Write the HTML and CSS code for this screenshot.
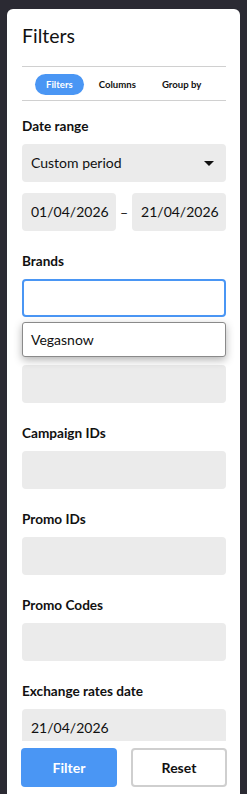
FILE: index.html
```html
<!DOCTYPE html>
<html>
<head>
<meta charset="utf-8">
<link rel="stylesheet" href="styles.css">
</head>
<body>
<div class="panel">
  <div class="head">
    <h1 class="title">Filters</h1>
    <div class="tabs">
      <span class="tab active">Filters</span>
      <span class="tab">Columns</span>
      <span class="tab">Group by</span>
    </div>
  </div>
  <div class="body">
    <div class="field">
      <div class="label">Date range</div>
      <div class="box select">Custom period<span class="caret"></span></div>
      <div class="dates">
        <div class="box">01/04/2026</div>
        <span class="dash">–</span>
        <div class="box">21/04/2026</div>
      </div>
    </div>
    <div class="field brands">
      <div class="label">Brands</div>
      <div class="box focus"></div>
      <div class="menu">Vegasnow</div>
    </div>
    <div class="field">
      <div class="label hidden">Games</div>
      <div class="box"></div>
    </div>
    <div class="field">
      <div class="label">Campaign IDs</div>
      <div class="box"></div>
    </div>
    <div class="field">
      <div class="label">Promo IDs</div>
      <div class="box"></div>
    </div>
    <div class="field">
      <div class="label">Promo Codes</div>
      <div class="box"></div>
    </div>
    <div class="field">
      <div class="label">Exchange rates date</div>
      <div class="box">21/04/2026</div>
    </div>
  </div>
  <div class="footer">
    <button class="btn primary">Filter</button>
    <button class="btn secondary">Reset</button>
  </div>
</div>
</body>
</html>
```
FILE: styles.css
```css
* { box-sizing: border-box; }
html, body { margin: 0; padding: 0; height: 100%; }
body {
  background: #2b2a33;
  font-family: Lato, "Noto Sans", sans-serif;
  color: #111;
  overflow: hidden;
}
.panel {
  margin: 9px 7px 0 7px;
  height: 785px;
  background: #fff;
  border-radius: 6px 6px 0 0;
  display: flex;
  flex-direction: column;
  overflow: hidden;
}
.head { padding: 15px 14px 0 15px; }
.title {
  margin: 0;
  font-size: 19.5px;
  font-weight: 400;
  line-height: 24px;
  height: 24px;
}
.tabs {
  margin-top: 18px;
  border-top: 1px solid #d0d0d0;
  border-bottom: 1px solid #d0d0d0;
  padding: 7px 0 5px 13px;
  display: flex;
  gap: 4px;
}
.tab {
  font-size: 9.6px;
  font-weight: 700;
  line-height: 21px;
  height: 21px;
  padding: 0 11px;
  border-radius: 11px;
  color: #111;
}
.tab.active { background: #4a96f4; color: #fff; }
.body {
  flex: 1;
  overflow: hidden;
  padding: 15px 14px 0 15px;
}
.field { margin-bottom: 20px; position: relative; }
.label {
  font-size: 13.6px;
  font-weight: 700;
  line-height: 20px;
  height: 20px;
  margin-bottom: 8px;
}
.label.hidden { visibility: hidden; }
.box {
  height: 38px;
  background: #ebebeb;
  border-radius: 4px;
  font-size: 14px;
  line-height: 38px;
  padding: 0 9px;
  position: relative;
  white-space: nowrap;
  overflow: hidden;
}
.select { margin-bottom: 11px; }
.caret {
  position: absolute;
  right: 12px;
  top: 17px;
  width: 0; height: 0;
  border-left: 5px solid transparent;
  border-right: 5px solid transparent;
  border-top: 5px solid #111;
}
.dates {
  display: grid;
  grid-template-columns: minmax(0, 1fr) auto minmax(0, 1fr);
  gap: 4px;
  align-items: center;
}
.dash { font-size: 14px; }
.box.focus {
  background: #fff;
  border: 2px solid #4a96f4;
}
.menu {
  position: absolute;
  left: 0; right: 0;
  top: 71px;
  height: 35px;
  background: #fff;
  border: 1px solid #8a8a8a;
  border-radius: 3px;
  box-shadow: 0 3px 9px rgba(0,0,0,0.3);
  font-size: 14px;
  line-height: 33px;
  padding: 0 8px;
  z-index: 2;
}
.footer {
  height: 53px;
  padding: 7px 13px 0 14px;
  display: flex;
  gap: 14px;
  background: #fff;
}
.btn {
  width: 96px;
  height: 39px;
  border-radius: 4px;
  font-family: Lato, "Noto Sans", sans-serif;
  font-size: 14px;
  font-weight: 700;
}
.primary { background: #4a96f4; border: 0; color: #fff; }
.secondary { background: #fff; border: 2px solid #cfcfcf; color: #111; }
```
